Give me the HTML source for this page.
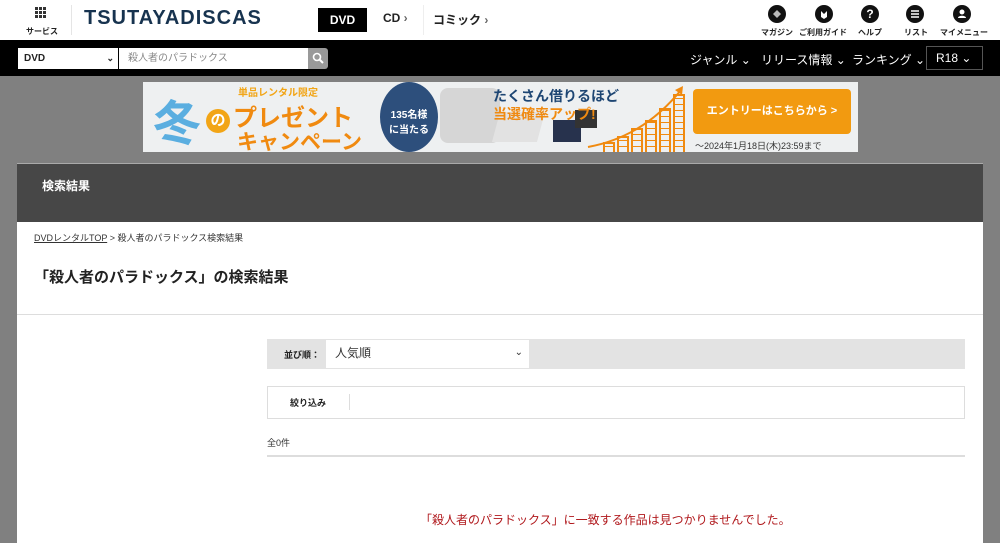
<!DOCTYPE html>
<html><head><meta charset="utf-8">
<style>
*{margin:0;padding:0;box-sizing:border-box}
body{width:1000px;height:535px;overflow:hidden;background:#808080;font-family:"Liberation Sans","Noto Sans CJK JP",sans-serif;color:#222;position:relative}
.abs{position:absolute}
#top{left:0;top:0;width:1000px;height:40px;background:#fff}
#nav{left:0;top:40px;width:1000px;height:36px;background:#000}
.ic{position:absolute;top:5px;width:18px;height:18px;border-radius:50%;background:#111}
.icl{position:absolute;top:27px;font-size:8px;font-weight:bold;color:#222;white-space:nowrap}
.bar{position:absolute;bottom:0;border:2px solid #f08a10;border-bottom:none;background:repeating-linear-gradient(0deg,transparent 0 5px,#f08a10 5px 6px)}
</style></head><body>
<div id="top" class="abs">
  <div class="abs" style="left:35px;top:7px;width:11px;height:11px;display:grid;grid-template-columns:repeat(3,3px);gap:1px">
    <i style="background:#333"></i><i style="background:#333"></i><i style="background:#333"></i><i style="background:#333"></i><i style="background:#333"></i><i style="background:#333"></i><i style="background:#333"></i><i style="background:#333"></i><i style="background:#333"></i>
  </div>
  <div class="abs" style="left:26px;top:26px;font-size:8px;font-weight:bold">サービス</div>
  <div class="abs" style="left:71px;top:5px;width:1px;height:30px;background:#e5e5e5"></div>
  <div class="abs" style="left:84px;top:7px;font-size:20px;font-weight:bold;color:#17334f;letter-spacing:1px">TSUTAYADISCAS</div>
  <div class="abs" style="left:318px;top:8px;width:49px;height:24px;background:#000;color:#fff;font-size:12px;font-weight:bold;text-align:center;line-height:24px">DVD</div>
  <div class="abs" style="left:383px;top:11px;font-size:12px;font-weight:bold">CD <span style="color:#666">›</span></div>
  <div class="abs" style="left:423px;top:5px;width:1px;height:30px;background:#eee"></div>
  <div class="abs" style="left:433px;top:11px;font-size:12px;font-weight:bold">コミック <span style="color:#666">›</span></div>

  <div class="ic" style="left:768px"><svg width="18" height="18"><path d="M5 9l4-4 4 4-4 4z" fill="#bbb"/></svg></div>
  <div class="icl" style="left:761px">マガジン</div>
  <div class="ic" style="left:815px"><svg width="18" height="18"><path d="M6 6l3 3 3-3v6l-3 2-3-2z" fill="#fff"/></svg></div>
  <div class="icl" style="left:799px">ご利用ガイド</div>
  <div class="ic" style="left:861px;color:#fff;font-size:12px;font-weight:bold;text-align:center;line-height:18px">?</div>
  <div class="icl" style="left:858px">ヘルプ</div>
  <div class="ic" style="left:906px"><svg width="18" height="18"><path d="M5 6h8M5 9h8M5 12h8" stroke="#fff" stroke-width="1.6"/></svg></div>
  <div class="icl" style="left:904px">リスト</div>
  <div class="ic" style="left:953px"><svg width="18" height="18"><circle cx="9" cy="7" r="2.5" fill="#fff"/><path d="M5 13c0-3 8-3 8 0z" fill="#fff"/></svg></div>
  <div class="icl" style="left:940px">マイメニュー</div>
</div>

<div id="nav" class="abs">
  <div class="abs" style="left:18px;top:8px;width:100px;height:21px;background:#fff;font-size:10px;font-weight:bold;line-height:21px;padding-left:6px">DVD<span style="position:absolute;right:4px;font-size:9px">⌄</span></div>
  <div class="abs" style="left:119px;top:8px;width:189px;height:21px;background:#fff;font-size:10px;color:#888;line-height:21px;padding-left:9px">殺人者のパラドックス</div>
  <div class="abs" style="left:308px;top:8px;width:20px;height:21px;background:#999;border-radius:0 3px 3px 0"><svg width="20" height="21"><circle cx="9" cy="9" r="3.5" stroke="#fff" stroke-width="1.6" fill="none"/><path d="M11.5 11.5l3.5 3.5" stroke="#fff" stroke-width="2"/></svg></div>
  <div class="abs" style="left:690px;top:11px;font-size:12px;color:#fff;white-space:nowrap">ジャンル ⌄</div>
  <div class="abs" style="left:761px;top:11px;font-size:12px;color:#fff;white-space:nowrap">リリース情報 ⌄</div>
  <div class="abs" style="left:852px;top:11px;font-size:12px;color:#fff;white-space:nowrap">ランキング ⌄</div>
  <div class="abs" style="left:926px;top:6px;width:57px;height:24px;border:1px solid #555;font-size:12px;color:#fff;line-height:22px;padding-left:9px">R18 ⌄</div>
</div>

<!-- banner -->
<div class="abs" style="left:143px;top:82px;width:715px;height:70px;background:#eef0f1;overflow:hidden">
  <div class="abs" style="left:10px;top:2px;font-size:48px;font-weight:bold;color:#5aaee0">冬</div>
  <div class="abs" style="left:63px;top:27px;width:24px;height:24px;border-radius:50%;background:#f2a516;color:#fff;font-size:15px;text-align:center;line-height:24px;font-weight:bold">の</div>
  <div class="abs" style="left:95px;top:2px;font-size:10px;font-weight:bold;color:#f2a516">単品レンタル限定</div>
  <div class="abs" style="left:90px;top:16px;font-size:24px;font-weight:bold;color:#f08a10;white-space:nowrap">プレゼント</div>
  <div class="abs" style="left:94px;top:44px;font-size:21px;font-weight:bold;color:#f08a10;white-space:nowrap">キャンペーン</div>
  <div class="abs" style="left:237px;top:0;width:58px;height:70px;border-radius:50%;background:#2d4f7c;color:#fff;font-size:10px;text-align:center;padding-top:24px;font-weight:bold">135名様<br>に当たる</div>
  <div class="abs" style="left:297px;top:6px;width:60px;height:55px;background:#d6d6d6;border-radius:8px"></div>
  <div class="abs" style="left:353px;top:30px;width:45px;height:30px;background:#e2e2e2;transform:skewX(-15deg)"></div>
  <div class="abs" style="left:410px;top:38px;width:28px;height:22px;background:#27324d"></div>
  <div class="abs" style="left:432px;top:28px;width:22px;height:18px;background:#333"></div>
  <div class="abs" style="left:350px;top:4px;font-size:14px;font-weight:bold;color:#1e4673;white-space:nowrap">たくさん借りるほど</div>
  <div class="abs" style="left:350px;top:22px;font-size:14px;font-weight:bold;color:#f08a10;white-space:nowrap">当選確率アップ!</div>
  <div class="bar" style="left:460px;width:12px;height:10px"></div>
  <div class="bar" style="left:474px;width:12px;height:16px"></div>
  <div class="bar" style="left:488px;width:12px;height:24px"></div>
  <div class="bar" style="left:502px;width:12px;height:32px"></div>
  <div class="bar" style="left:516px;width:12px;height:44px"></div>
  <div class="bar" style="left:530px;width:12px;height:58px"></div>
  <svg class="abs" style="left:440px;top:0" width="110" height="70"><path d="M5 65 Q60 55 98 8" stroke="#f08a10" stroke-width="2" fill="none"/><path d="M92 8l8-4-1 9z" fill="#f08a10"/></svg>
  <div class="abs" style="left:550px;top:7px;width:158px;height:45px;background:#f29a10;border-radius:4px;color:#fff;font-size:11px;font-weight:bold;line-height:45px;text-align:center">エントリーはこちらから &gt;</div>
  <div class="abs" style="left:552px;top:57px;font-size:9px;color:#333;white-space:nowrap">〜2024年1月18日(木)23:59まで</div>
</div>

<!-- panel -->
<div class="abs" style="left:17px;top:163px;width:966px;height:380px;background:#fff;border-top:1px solid #aaa"></div>
<div class="abs" style="left:17px;top:164px;width:966px;height:58px;background:#474747"></div>
<div class="abs" style="left:42px;top:177px;font-size:12px;font-weight:bold;color:#fff">検索結果</div>
<div class="abs" style="left:34px;top:231px;font-size:9px;color:#333;white-space:nowrap"><span style="text-decoration:underline">DVDレンタルTOP</span> &gt; 殺人者のパラドックス検索結果</div>
<div class="abs" style="left:34px;top:266px;font-size:15px;font-weight:bold;white-space:nowrap">「殺人者のパラドックス」の検索結果</div>
<div class="abs" style="left:17px;top:314px;width:966px;height:1px;background:#ddd"></div>

<div class="abs" style="left:267px;top:339px;width:698px;height:30px;background:#e3e3e3"></div>
<div class="abs" style="left:284px;top:348px;font-size:9px;font-weight:bold">並び順：</div>
<div class="abs" style="left:326px;top:340px;width:203px;height:28px;background:#fff;font-size:12px;color:#333;line-height:26px;padding-left:9px">人気順<span style="position:absolute;right:6px;font-size:10px">⌄</span></div>
<div class="abs" style="left:267px;top:386px;width:698px;height:33px;border:1px solid #ddd;background:#fff"></div>
<div class="abs" style="left:290px;top:396px;font-size:9px;font-weight:bold">絞り込み</div>
<div class="abs" style="left:349px;top:394px;width:1px;height:16px;background:#ddd"></div>
<div class="abs" style="left:267px;top:436px;font-size:9px;color:#333">全0件</div>
<div class="abs" style="left:267px;top:455px;width:698px;height:2px;background:#ddd"></div>
<div class="abs" style="left:420px;top:511px;font-size:12px;color:#b0181c;white-space:nowrap">「殺人者のパラドックス」に一致する作品は見つかりませんでした。</div>
</body></html>
